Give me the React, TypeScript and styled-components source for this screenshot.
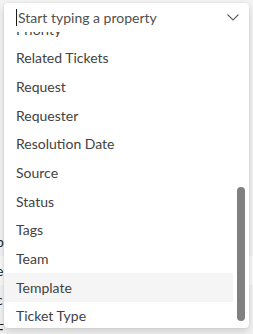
import React from 'react'
import styled, { createGlobalStyle } from 'styled-components'

const GlobalStyle = createGlobalStyle`
  html, body {
    margin: 0;
    padding: 0;
    background: #f3f3f3;
  }
  body {
    font-family: "Segoe UI", Lato, "Noto Sans", sans-serif;
  }
`

const ROW_H = 28.67
const SCROLL_OFFSET = 17

const fields = [
  'Priority',
  'Related Tickets',
  'Request',
  'Requester',
  'Resolution Date',
  'Source',
  'Status',
  'Tags',
  'Team',
  'Template',
  'Ticket Type',
  'Title',
]

const backRows = [
  { text: '', band: false },
  { text: '', band: false },
  { text: '', band: false },
  { text: '', band: false },
  { text: '', band: false },
  { text: '', band: false },
  { text: '', band: false },
  { text: 'p', band: false },
  { text: 'e', band: true },
  { text: 'c', band: false },
  { text: 'F', band: false },
]

const Page = styled.div`
  position: relative;
  width: 253px;
  height: 334px;
  overflow: hidden;
  background: #f3f3f3;
`

const BackTable = styled.div`
  display: flex;
  flex-direction: column;
  padding-top: 24px;
`

const BackRow = styled.div<{ $band: boolean }>`
  height: 29px;
  display: flex;
  align-items: center;
  padding-left: 0;
  background: ${({ $band }) => ($band ? '#fafafa' : '#f3f3f3')};
  font-size: 14px;
  color: #242424;
`

const BackText = styled.span`
  margin-left: -4px;
`

const Dropdown = styled.div`
  position: absolute;
  left: 4px;
  top: 3px;
  width: 245px;
  display: flex;
  flex-direction: column;
  border-radius: 4px;
  background: #ffffff;
  box-shadow: 0 0 2px rgba(0, 0, 0, 0.12), 0 4px 8px rgba(0, 0, 0, 0.14);
`

const InputBar = styled.div`
  height: 29px;
  display: flex;
  align-items: center;
  padding: 0 9px 0 12px;
  border-radius: 4px 4px 0 0;
  background: #ffffff;
`

const Caret = styled.span`
  width: 1px;
  height: 17px;
  background: #1a1a1a;
  margin-right: 1px;
`

const Placeholder = styled.span`
  flex: 1;
  font-size: 14px;
  color: #505050;
  white-space: nowrap;
`

const Chevron = styled.svg`
  width: 14px;
  height: 9px;
  flex: none;
`

const List = styled.div`
  position: relative;
  height: 296px;
  overflow: hidden;
  border-radius: 0 0 4px 4px;
`

const Items = styled.div`
  display: flex;
  flex-direction: column;
  margin-top: -${SCROLL_OFFSET}px;
  padding-right: 16px;
`

const Item = styled.div<{ $active: boolean }>`
  height: ${ROW_H}px;
  display: flex;
  align-items: center;
  padding-left: 12px;
  font-size: 14px;
  color: #424242;
  background: ${({ $active }) => ($active ? '#f5f5f5' : 'transparent')};
  white-space: nowrap;
`

const Thumb = styled.div`
  position: absolute;
  right: 4px;
  top: 155px;
  width: 8px;
  height: 134px;
  border-radius: 4px;
  background: #808080;
`

export default function App() {
  return (
    <>
      <GlobalStyle />
      <Page>
        <BackTable>
          {backRows.map((r, i) => (
            <BackRow key={i} $band={r.band}>
              <BackText>{r.text}</BackText>
            </BackRow>
          ))}
        </BackTable>
        <Dropdown>
          <InputBar>
            <Caret />
            <Placeholder>Start typing a property</Placeholder>
            <Chevron viewBox="0 0 14 9">
              <path d="M1.5 1.5 L7 7 L12.5 1.5" fill="none" stroke="#616161" strokeWidth="1.1" />
            </Chevron>
          </InputBar>
          <List>
            <Items>
              {fields.map((f) => (
                <Item key={f} $active={f === 'Template'}>
                  {f}
                </Item>
              ))}
            </Items>
            <Thumb />
          </List>
        </Dropdown>
      </Page>
    </>
  )
}
